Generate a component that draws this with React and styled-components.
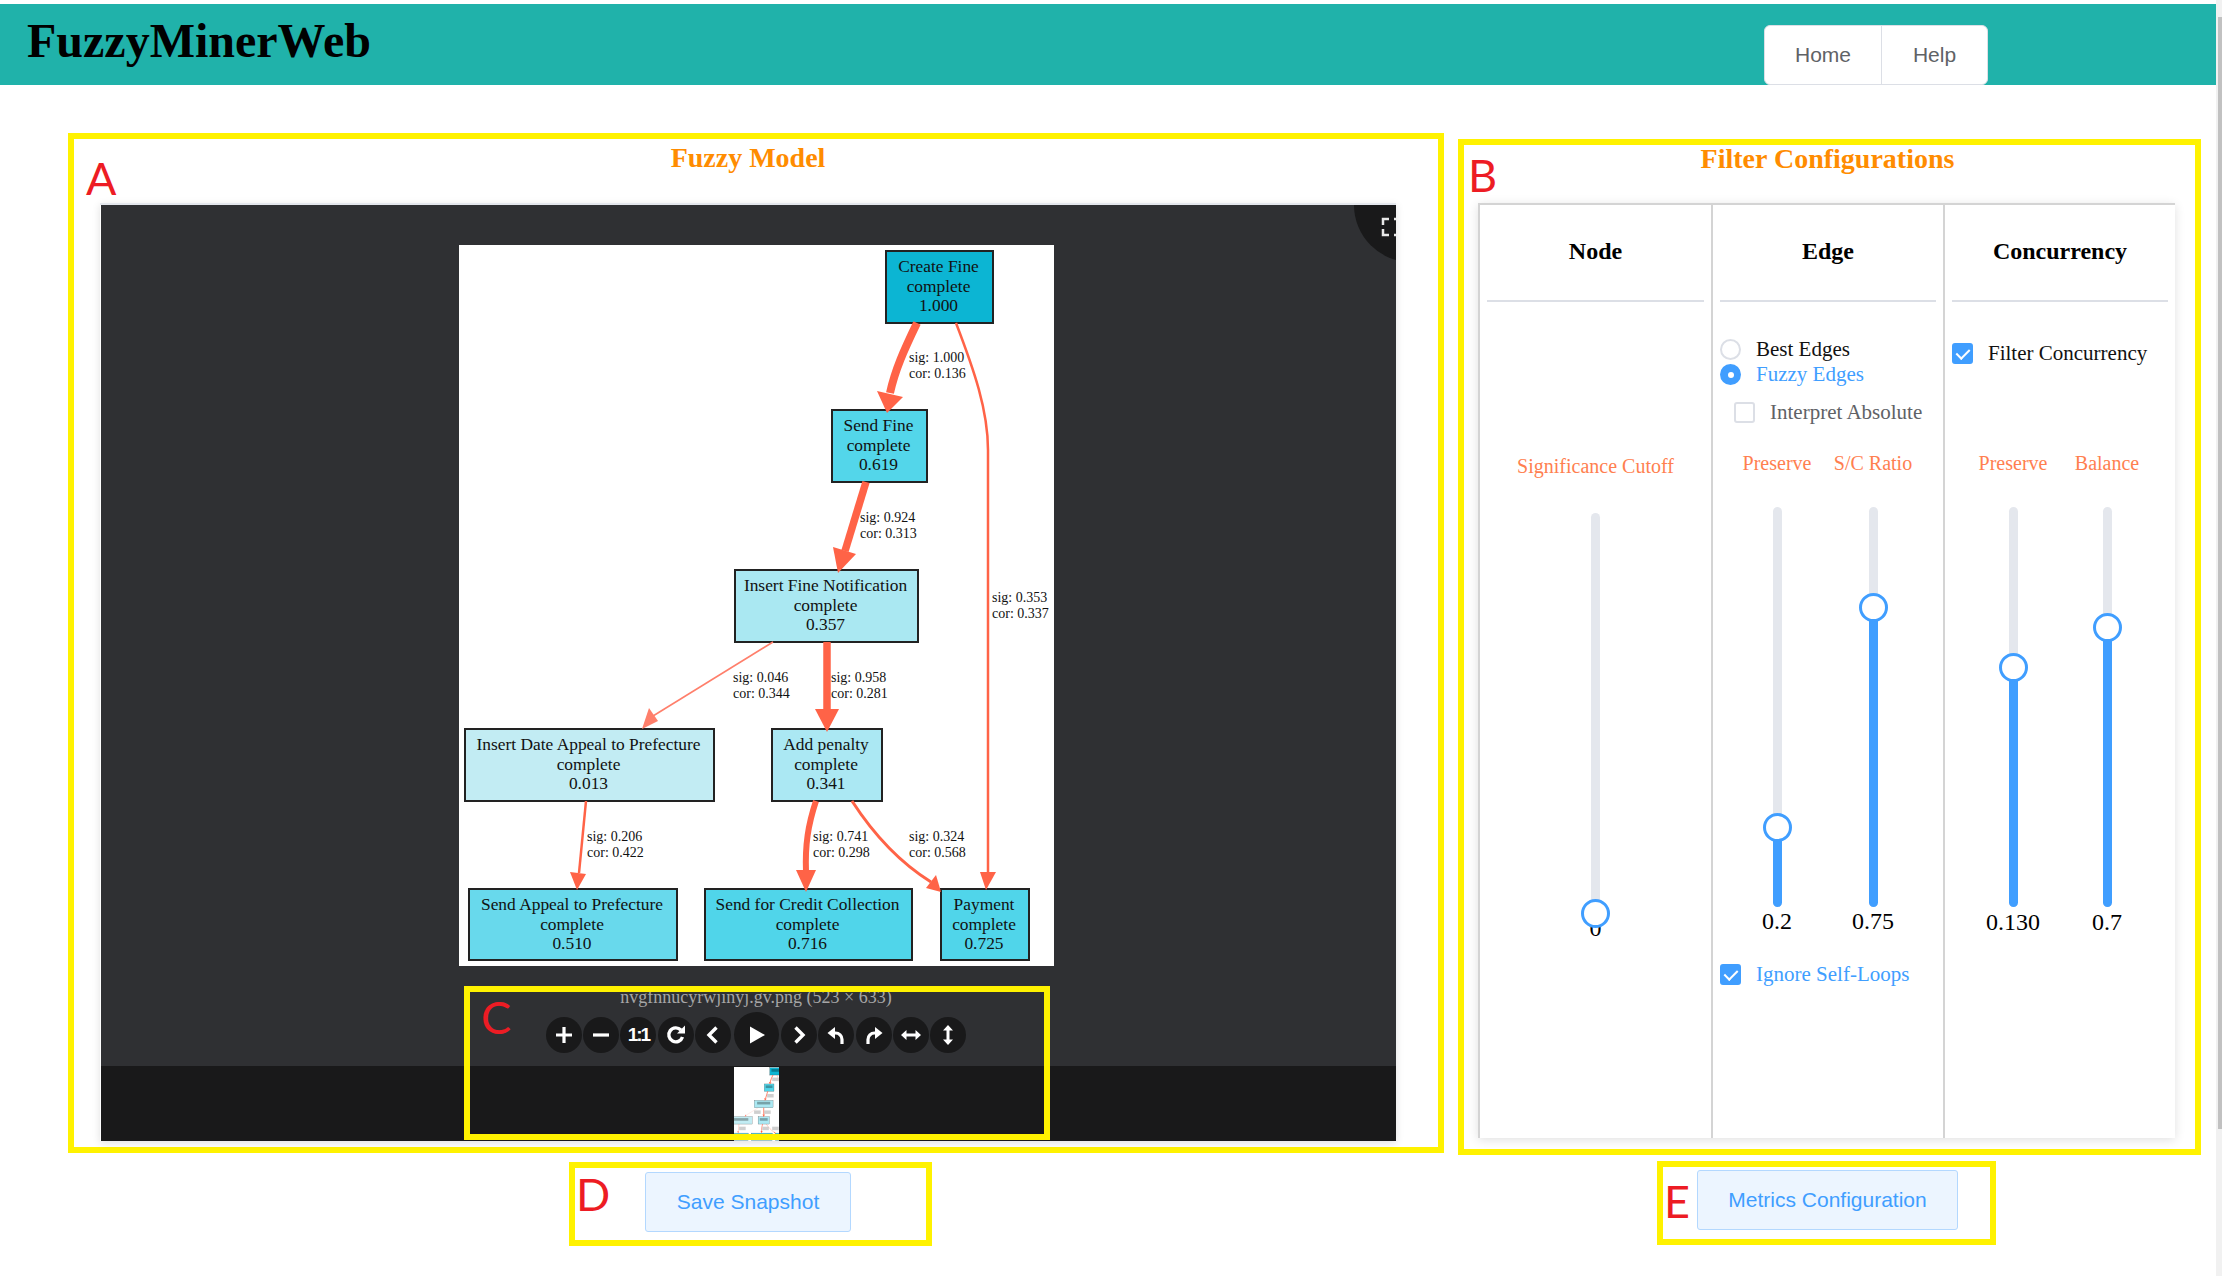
import React from 'react';
import styled, { createGlobalStyle } from 'styled-components';

const serif = '"Liberation Serif", "Times New Roman", serif';
const sans = '"Liberation Sans", Arial, sans-serif';
const yellow = '#fff200';
const blue = '#409eff';
const tomato = '#ff6347';

const GlobalStyle = createGlobalStyle`
  html, body {
    margin: 0;
    padding: 0;
    height: 100%;
    overflow: hidden;
    background: #fff;
  }
  * { box-sizing: border-box; }
`;

const Page = styled.div`
  width: 2216px;
  padding-top: 4px;
  font-family: ${serif};
`;

const ScrollTrack = styled.div`
  position: fixed;
  top: 0;
  right: 0;
  bottom: 0;
  width: 6px;
  background: #f1f1f1;
  padding: 17px 0 147px 2px;
`;

const ScrollThumb = styled.div`
  height: 100%;
  background: #c1c1c1;
`;

const Header = styled.header`
  height: 81px;
  background: #20b2aa;
  display: flex;
  justify-content: space-between;
  align-items: flex-start;
  padding: 0 228px 0 27px;
`;

const Brand = styled.h1`
  margin: 0;
  font-size: 48px;
  line-height: 73px;
  font-weight: 700;
  color: #000;
`;

const NavGroup = styled.nav`
  display: flex;
  margin-top: 21px;
  height: 60px;
  background: #fff;
  border: 1.5px solid #dcdfe6;
  border-radius: 6px;
  font-family: ${sans};
  font-size: 21px;
  color: #606266;
`;

const NavItem = styled.a`
  display: flex;
  align-items: center;
  justify-content: center;
  width: ${({ $w }) => $w}px;
  & + & { border-left: 1.5px solid #dcdfe6; }
`;

const Main = styled.main`
  display: flex;
  align-items: flex-start;
  gap: 14px;
  padding: 48px 0 0 68px;
`;

const Section = styled.section`
  position: relative;
  width: ${({ $w }) => $w}px;
  height: ${({ $h }) => $h}px;
  margin-top: ${({ $top }) => $top || 0}px;
  border: 6px solid ${yellow};
`;

const SectionTitle = styled.h3`
  margin: 0;
  height: ${({ $h }) => $h}px;
  padding-right: ${({ $pr }) => $pr}px;
  font-size: 28px;
  line-height: ${({ $lh }) => $lh}px;
  font-weight: 700;
  text-align: center;
  color: #ff8c00;
`;

const Mark = styled.span`
  position: absolute;
  left: ${({ $x }) => $x}px;
  top: ${({ $y }) => $y}px;
  font-family: "Lato", sans-serif;
  font-size: 45px;
  font-weight: 400;
  line-height: 45px;
  color: #ed1c24;
  z-index: 5;
`;

const ViewerCard = styled.div`
  margin-left: 26px;
  width: 1296px;
  height: 938px;
  border-top: 2px solid #e4e7ed;
  box-shadow: 0 2px 8px rgba(0, 0, 0, 0.12);
  overflow: hidden;
`;

const Viewer = styled.div`
  position: relative;
  width: 1310px;
  height: 936px;
  margin-left: 1px;
  background: #2f3033;
  display: flex;
  flex-direction: column;
  align-items: center;
  padding-top: 40px;
`;

const Corner = styled.div`
  position: absolute;
  top: -57px;
  right: -57px;
  width: 114px;
  height: 114px;
  border-radius: 50%;
  background: #19191a;
`;

const FullIcon = styled.svg`
  position: absolute;
  top: 63px;
  left: 0;
  width: 114px;
  height: 114px;
`;

const GraphSheet = styled.svg`
  display: block;
  width: 595px;
  height: 721px;
  background: #fff;
  flex: none;
`;

const Caption = styled.div`
  margin-top: 21px;
  height: 20px;
  font-size: 18px;
  line-height: 20px;
  color: #a6a6a6;
`;

const Toolbar = styled.div`
  display: flex;
  align-items: center;
  gap: 1.2px;
  height: 45px;
  margin-top: 5px;
`;

const ToolButton = styled.div`
  width: ${({ $big }) => ($big ? 45 : 36)}px;
  height: ${({ $big }) => ($big ? 45 : 36)}px;
  margin: 0 ${({ $big }) => ($big ? 1.5 : 0)}px;
  border-radius: 50%;
  background: #19191a;
  color: #fff;
  display: flex;
  align-items: center;
  justify-content: center;
  font-family: ${sans};
  font-weight: 700;
  font-size: 19px;
  letter-spacing: -2px;
`;

const ThumbStrip = styled.div`
  margin-top: 9px;
  align-self: stretch;
  height: 76px;
  background: #19191a;
  display: flex;
  justify-content: center;
  padding-top: 1px;
`;

const ThumbClip = styled.div`
  width: 45px;
  height: 75px;
  overflow: hidden;
  display: flex;
  justify-content: center;
  background: #fff;
`;

const ThumbSheet = styled.svg`
  display: block;
  flex: none;
  width: 61px;
  height: 74px;
  background: #fff;
`;

const CaptureBox = styled.div`
  position: absolute;
  left: 390px;
  top: 847px;
  width: 586px;
  height: 154px;
  border: 6px solid ${yellow};
  z-index: 4;
`;

const Panel = styled.div`
  margin-left: 14px;
  width: 697px;
  height: 935px;
  display: grid;
  grid-template-columns: 233px 232px 232px;
  border-top: 2px solid #d4d4d4;
  box-shadow: 0 2px 10px rgba(0, 0, 0, 0.12);
`;

const Column = styled.div`
  padding: 0 7px;
  border-left: 2px solid #d4d4d4;
  display: flex;
  flex-direction: column;
`;

const ColumnTitle = styled.h4`
  margin: 0;
  height: 97px;
  padding-top: 31px;
  border-bottom: 2px solid #dcdfe6;
  font-size: 24px;
  line-height: 30px;
  font-weight: 700;
  text-align: center;
  color: #000;
`;

const Options = styled.div`
  height: ${({ $h }) => $h}px;
  padding-top: ${({ $top }) => $top || 0}px;
`;

const Option = styled.label`
  display: flex;
  align-items: center;
  gap: 15px;
  height: 25px;
  margin: ${({ $m }) => $m || 0};
  font-size: 21px;
  color: ${({ $c }) => $c || '#111'};
`;

const Radio = styled.span`
  flex: none;
  width: 21px;
  height: 21px;
  border-radius: 50%;
  border: 2px solid ${({ $on }) => ($on ? blue : '#dcdfe6')};
  background: ${({ $on }) => ($on ? blue : '#fff')};
  display: flex;
  align-items: center;
  justify-content: center;
  &::after {
    content: '';
    width: 6px;
    height: 6px;
    border-radius: 50%;
    background: ${({ $on }) => ($on ? '#fff' : 'transparent')};
  }
`;

const Check = styled.span`
  flex: none;
  position: relative;
  width: 21px;
  height: 21px;
  border-radius: 3px;
  border: 2px solid ${({ $on }) => ($on ? blue : '#dcdfe6')};
  background: ${({ $on }) => ($on ? blue : '#fff')};
  &::after {
    content: '';
    display: ${({ $on }) => ($on ? 'block' : 'none')};
    position: absolute;
    left: 5px;
    top: 1px;
    width: 6px;
    height: 11px;
    border: solid #fff;
    border-width: 0 2px 2px 0;
    transform: rotate(45deg);
  }
`;

const SliderRow = styled.div`
  display: grid;
  grid-template-columns: repeat(${({ $n }) => $n}, ${({ $pitch }) => $pitch || 96}px);
  justify-content: center;
  padding-right: ${({ $pr }) => $pr || 0}px;
`;

const SliderCol = styled.div`
  display: flex;
  flex-direction: column;
  align-items: center;
`;

const SliderLabel = styled.div`
  height: 24px;
  white-space: nowrap;
  font-size: 20px;
  line-height: 24px;
  color: #ff7f50;
`;

const Track = styled.div`
  position: relative;
  margin-top: ${({ $top }) => $top || 32}px;
  width: 9px;
  height: 400px;
  border-radius: 5px;
  background: #e4e7ed;
`;

const Fill = styled.div`
  position: absolute;
  left: 0;
  right: 0;
  bottom: 0;
  border-radius: 5px;
  background: ${blue};
`;

const Thumb = styled.div`
  position: absolute;
  left: 50%;
  width: 29px;
  height: 29px;
  margin: 0 0 -14.5px -14.5px;
  border-radius: 50%;
  background: #fff;
  border: 3px solid ${blue};
`;

const SliderValue = styled.div`
  margin-top: ${({ $top }) => $top || 1}px;
  height: 24px;
  font-size: 24px;
  line-height: 24px;
  color: #000;
`;

const FooterRow = styled.div`
  display: flex;
  align-items: flex-start;
  padding-left: 569px;
`;

const ActionBox = styled.div`
  position: relative;
  margin-left: ${({ $left }) => $left || 0}px;
  margin-top: ${({ $top }) => $top}px;
  width: ${({ $w }) => $w}px;
  height: ${({ $h }) => $h}px;
  padding: ${({ $pad }) => $pad};
  border: 6px solid ${yellow};
`;

const ActionButton = styled.button`
  display: block;
  width: ${({ $w }) => $w}px;
  height: 60px;
  padding: 0;
  background: #ecf5ff;
  border: 1.5px solid #b3d8ff;
  border-radius: 3px;
  font-family: ${sans};
  font-size: 21px;
  color: ${blue};
`;

// graph layout, coordinates are relative to the rendered sheet
const nodes = [
  { x: 427, y: 6, w: 107, h: 72, fill: '#0cb5d3', lines: ['Create Fine', 'complete', '1.000'] },
  { x: 373, y: 165, w: 95, h: 72, fill: '#53d6ea', lines: ['Send Fine', 'complete', '0.619'] },
  { x: 276, y: 325, w: 183, h: 72, fill: '#aae8f2', lines: ['Insert Fine Notification', 'complete', '0.357'] },
  { x: 6, y: 484, w: 249, h: 72, fill: '#c2ecf3', lines: ['Insert Date Appeal to Prefecture', 'complete', '0.013'] },
  { x: 313, y: 484, w: 110, h: 72, fill: '#abe8f3', lines: ['Add penalty', 'complete', '0.341'] },
  { x: 10, y: 644, w: 208, h: 71, fill: '#68d9ec', lines: ['Send Appeal to Prefecture', 'complete', '0.510'] },
  { x: 246, y: 644, w: 207, h: 71, fill: '#50d5ea', lines: ['Send for Credit Collection', 'complete', '0.716'] },
  { x: 482, y: 644, w: 88, h: 71, fill: '#50d5ea', lines: ['Payment', 'complete', '0.725'] },
];

const edges = [
  { d: 'M458 78C445 105 436 125 431 148', w: 8, head: '418,146 444,152 428,168' },
  { d: 'M497 78C515 125 529 165 529 205V628', w: 2.5, head: '521,627 537,627 527,645' },
  { d: 'M407 237L386 306', w: 7.5, head: '374,302 397,309 379,328' },
  { d: 'M314 397L194 471', w: 1.6, head: '190,463 199,476 183,484', fill: '#ff7f6b' },
  { d: 'M368 397V465', w: 7.500, head: '356,464 380,464 368,487' },
  { d: 'M127 556L120 628', w: 2.5, head: '111,627 127,629 118,645' },
  { d: 'M357 556C349 580 346 600 347 627', w: 6, head: '337,625 357,625 347,647' },
  { d: 'M393 556C415 590 440 617 472 637', w: 3, head: '477,630 467,643 482,647' },
];

const edgeLabels = [
  { x: 450, y: 117, lines: ['sig: 1.000', 'cor: 0.136'] },
  { x: 401, y: 277, lines: ['sig: 0.924', 'cor: 0.313'] },
  { x: 533, y: 357, lines: ['sig: 0.353', 'cor: 0.337'] },
  { x: 274, y: 437, lines: ['sig: 0.046', 'cor: 0.344'] },
  { x: 372, y: 437, lines: ['sig: 0.958', 'cor: 0.281'] },
  { x: 128, y: 596, lines: ['sig: 0.206', 'cor: 0.422'] },
  { x: 354, y: 596, lines: ['sig: 0.741', 'cor: 0.298'] },
  { x: 450, y: 596, lines: ['sig: 0.324', 'cor: 0.568'] },
];

function GraphShapes() {
  return (
    <>
      {nodes.map((n) => (
        <rect key={n.lines[0]} x={n.x} y={n.y} width={n.w} height={n.h} fill={n.fill} stroke="#222" strokeWidth="2" />
      ))}
      {edges.map((e) => (
        <g key={e.d}>
          <path d={e.d} fill="none" stroke={e.fill || tomato} strokeWidth={e.w} />
          <polygon points={e.head} fill={e.fill || tomato} />
        </g>
      ))}
    </>
  );
}

function Graph() {
  return (
    <GraphSheet viewBox="0 0 595 721">
      <GraphShapes />
      {nodes.map((n) => (
        <text key={n.lines[0]} textAnchor="middle" fontFamily={serif} fontSize="17.4" fill="#111">
          <tspan x={n.x + n.w / 2 - 1} y={n.y + 21}>{n.lines[0]}</tspan>
          <tspan x={n.x + n.w / 2 - 1} y={n.y + 41}>{n.lines[1]}</tspan>
          <tspan x={n.x + n.w / 2 - 1} y={n.y + 60}>{n.lines[2]}</tspan>
        </text>
      ))}
      {edgeLabels.map((l) => (
        <text key={l.lines[0]} fontFamily={serif} fontSize="14" fill="#111">
          <tspan x={l.x} y={l.y}>{l.lines[0]}</tspan>
          <tspan x={l.x} y={l.y + 16}>{l.lines[1]}</tspan>
        </text>
      ))}
    </GraphSheet>
  );
}

function GraphThumb() {
  return (
    <ThumbClip>
      <ThumbSheet viewBox="0 0 595 721">
        <GraphShapes />
        {nodes.map((n) => (
          <rect
            key={n.lines[0]}
            x={n.x + n.w * 0.15}
            y={n.y + 14}
            width={n.w * 0.7}
            height="26"
            fill="#000"
            opacity="0.3"
          />
        ))}
        {edgeLabels.map((l) => (
          <rect key={l.lines[0]} x={l.x} y={l.y - 14} width="64" height="34" fill="#bbb" opacity="0.7" />
        ))}
      </ThumbSheet>
    </ThumbClip>
  );
}

const toolIcons = {
  plus: <path d="M4 12h16M12 4v16" fill="none" stroke="currentColor" strokeWidth="3.2" />,
  minus: <path d="M4 12h16" fill="none" stroke="currentColor" strokeWidth="3.2" />,
  rotate: (
    <>
      <path d="M18.500 14a7 7 0 1 1-1.600-7" fill="none" stroke="currentColor" strokeWidth="3.4" />
      <path d="M13 10.500h8v-8z" fill="currentColor" />
    </>
  ),
  prev: <path d="M15.500 4.500L8 12l7.500 7.500" fill="none" stroke="currentColor" strokeWidth="3.4" />,
  play: <path d="M6 3.500L21 12 6 20.500z" fill="currentColor" />,
  next: <path d="M8.500 4.500L16 12l-7.500 7.500" fill="none" stroke="currentColor" strokeWidth="3.4" />,
  undo: (
    <>
      <path d="M11 4L3.500 10 11 16z" fill="currentColor" />
      <path d="M9 10h2.500a6.500 6.500 0 0 1 6.500 6.500V21" fill="none" stroke="currentColor" strokeWidth="3.2" />
    </>
  ),
  redo: (
    <>
      <path d="M13 4l7.500 6-7.500 6z" fill="currentColor" />
      <path d="M15 10h-2.500A6.500 6.500 0 0 0 6 16.500V21" fill="none" stroke="currentColor" strokeWidth="3.2" />
    </>
  ),
  flipH: (
    <>
      <path d="M6 12h12" fill="none" stroke="currentColor" strokeWidth="3" />
      <path d="M7.500 7L2 12l5.500 5zM16.500 7L22 12l-5.500 5z" fill="currentColor" />
    </>
  ),
  flipV: (
    <>
      <path d="M12 6v12" fill="none" stroke="currentColor" strokeWidth="3" />
      <path d="M7 7.500L12 2l5 5.500zM7 16.500L12 22l5-5.500z" fill="currentColor" />
    </>
  ),
};

function ToolIcon({ name, size = 24 }) {
  return (
    <svg width={size} height={size} viewBox="0 0 24 24">
      {toolIcons[name]}
    </svg>
  );
}

function Slider({ label, value, at, trackTop, lift }) {
  return (
    <SliderCol>
      <SliderLabel>{label}</SliderLabel>
      <Track $top={trackTop}>
        <Fill style={{ height: `${at * 100}%` }} />
        <Thumb style={{ bottom: `${at * 100}%` }} />
      </Track>
      <SliderValue $top={lift}>{value}</SliderValue>
    </SliderCol>
  );
}

export default function App() {
  return (
    <>
      <GlobalStyle />
      <ScrollTrack>
        <ScrollThumb />
      </ScrollTrack>
      <Page>
        <Header>
          <Brand>FuzzyMinerWeb</Brand>
          <NavGroup>
            <NavItem $w={116}>Home</NavItem>
            <NavItem $w={106}>Help</NavItem>
          </NavGroup>
        </Header>

        <Main>
          <Section $w={1376} $h={1020}>
            <Mark $x={12} $y={17}>A</Mark>
            <SectionTitle $h={64} $lh={38} $pr={16}>Fuzzy Model</SectionTitle>
            <ViewerCard>
              <Viewer>
                <Corner>
                  <FullIcon viewBox="0 0 114 114">
                    <path
                      d="M35 8h-6v6M35 24h-6v-6M40 8h6v6M40 24h6v-6"
                      fill="none"
                      stroke="#e8e8e8"
                      strokeWidth="2.5"
                    />
                  </FullIcon>
                </Corner>
                <Graph />
                <Caption>nvgfnnucyrwjinyj.gv.png (523 × 633)</Caption>
                <Toolbar>
                  <ToolButton><ToolIcon name="plus" /></ToolButton>
                  <ToolButton><ToolIcon name="minus" /></ToolButton>
                  <ToolButton>1:1</ToolButton>
                  <ToolButton><ToolIcon name="rotate" /></ToolButton>
                  <ToolButton><ToolIcon name="prev" /></ToolButton>
                  <ToolButton $big><ToolIcon name="play" /></ToolButton>
                  <ToolButton><ToolIcon name="next" /></ToolButton>
                  <ToolButton><ToolIcon name="undo" /></ToolButton>
                  <ToolButton><ToolIcon name="redo" /></ToolButton>
                  <ToolButton><ToolIcon name="flipH" /></ToolButton>
                  <ToolButton><ToolIcon name="flipV" /></ToolButton>
                </Toolbar>
                <ThumbStrip>
                  <GraphThumb />
                </ThumbStrip>
              </Viewer>
            </ViewerCard>
            <CaptureBox>
              <Mark $x={11} $y={3}>C</Mark>
            </CaptureBox>
          </Section>

          <Section $w={743} $h={1016} $top={6}>
            <Mark $x={4} $y={8}>B</Mark>
            <SectionTitle $h={58} $lh={28} $pr={4}>Filter Configurations</SectionTitle>
            <Panel>
              <Column>
                <ColumnTitle>Node</ColumnTitle>
                <Options $h={152} />
                <SliderRow $n={1}>
                  <Slider label="Significance Cutoff" value="0" at={0} trackTop={35} lift={3} />
                </SliderRow>
              </Column>
              <Column>
                <ColumnTitle>Edge</ColumnTitle>
                <Options $h={149} $top={35}>
                  <Option><Radio />Best Edges</Option>
                  <Option $c={blue}><Radio $on />Fuzzy Edges</Option>
                  <Option $c="#606266" $m="13px 0 0 14px"><Check />Interpret Absolute</Option>
                </Options>
                <SliderRow $n={2} $pr={6}>
                  <Slider label="Preserve" value="0.2" at={0.2} lift={2} />
                  <Slider label="S/C Ratio" value="0.75" at={0.75} lift={2} />
                </SliderRow>
                <Option $c={blue} $m="29px 0 0 0"><Check $on />Ignore Self-Loops</Option>
              </Column>
              <Column>
                <ColumnTitle>Concurrency</ColumnTitle>
                <Options $h={149} $top={39}>
                  <Option><Check $on />Filter Concurrency</Option>
                </Options>
                <SliderRow $n={2} $pitch={94}>
                  <Slider label="Preserve" value="0.130" at={0.6} lift={3} />
                  <Slider label="Balance" value="0.7" at={0.7} lift={3} />
                </SliderRow>
              </Column>
            </Panel>
          </Section>
        </Main>

        <FooterRow>
          <ActionBox $w={363} $h={84} $top={7} $pad="4px 0 0 70px">
            <Mark $x={1} $y={4}>D</Mark>
            <ActionButton $w={206}>Save Snapshot</ActionButton>
          </ActionBox>
          <ActionBox $w={339} $h={84} $top={6} $left={725} $pad="3px 0 0 34px">
            <Mark $x={1} $y={12}>E</Mark>
            <ActionButton $w={261}>Metrics Configuration</ActionButton>
          </ActionBox>
        </FooterRow>
      </Page>
    </>
  );
}
